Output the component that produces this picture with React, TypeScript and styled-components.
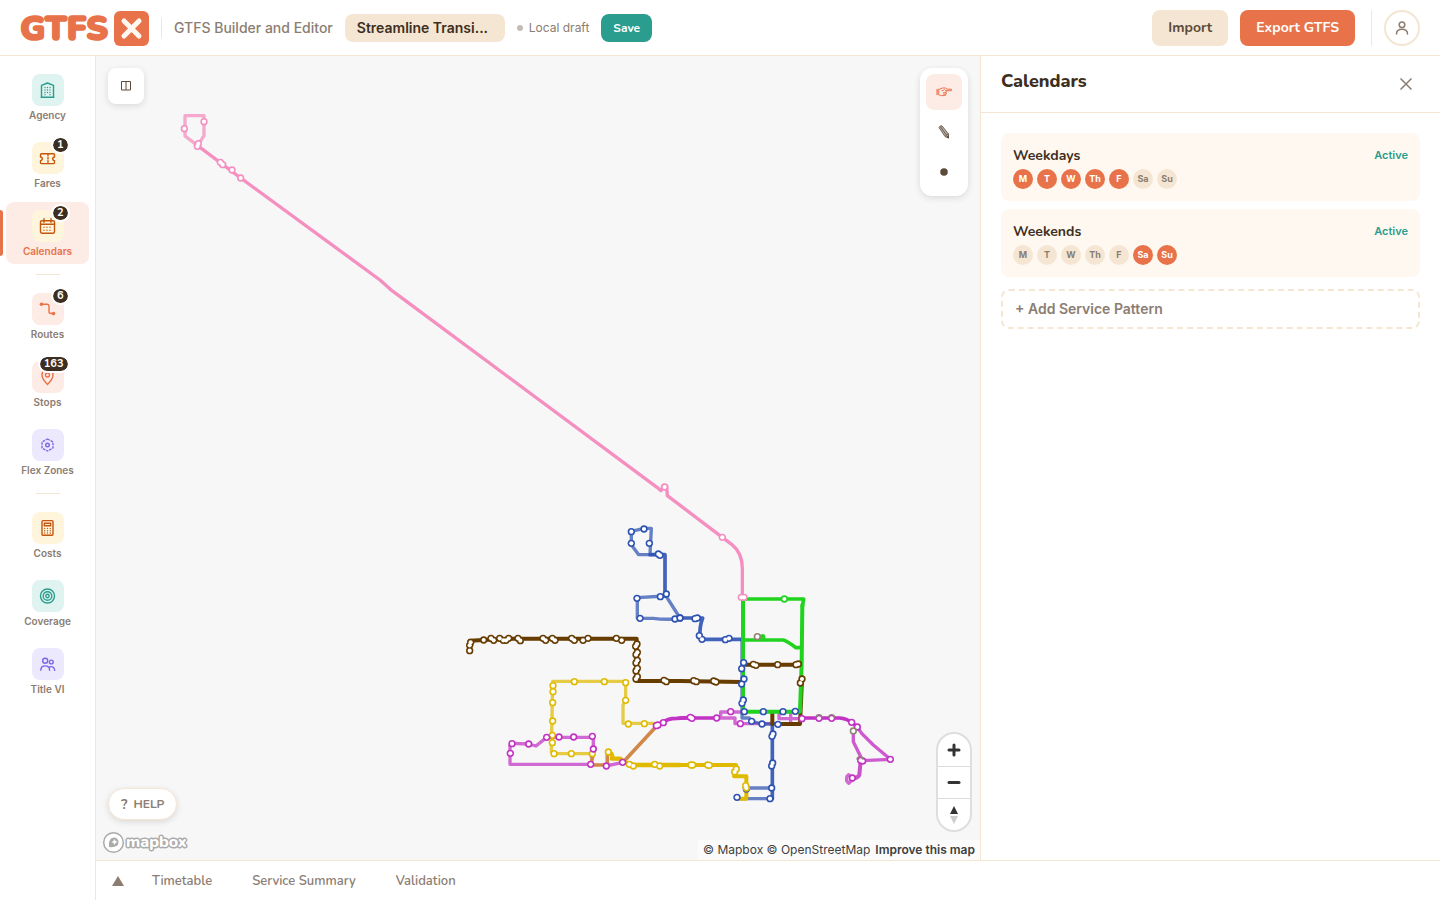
import React from "react";
import styled, { createGlobalStyle, css } from "styled-components";

const c = {
  coral: "#e8734a",
  coralSoft: "#fdebe5",
  teal: "#2a9d8f",
  tealSoft: "#dff4f0",
  sand: "#f5e6d3",
  cream: "#fff8f0",
  amber: "#c2570c",
  amberSoft: "#fff5dc",
  violet: "#7c66e8",
  violetSoft: "#ece9fe",
  ink: "#3d2e22",
  brown: "#5c4a3a",
  muted: "#8b7d72",
};

const rounded = `Nunito, "Open Sans", "Noto Sans", sans-serif`;
const body = `Inter, "Liberation Sans", sans-serif`;

const GlobalStyle = createGlobalStyle`
  *, *::before, *::after { box-sizing: border-box; }
  body { margin: 0; font-family: ${body}; color: ${c.ink}; background: #fff; }
  button { font: inherit; color: inherit; border: 0; background: none; padding: 0; cursor: pointer; }
  a { color: inherit; text-decoration: none; }
  h1, h2, h3, p, ul { margin: 0; padding: 0; }
  svg { display: block; }
`;

const Shell = styled.div`
  display: flex;
  flex-direction: column;
  height: 100vh;
`;

const Header = styled.header`
  display: flex;
  align-items: center;
  flex: none;
  height: 56px;
  padding: 0 20px;
  border-bottom: 1px solid ${c.sand};
`;

const Rule = styled.span<{ $tall?: boolean }>`
  width: 1px;
  height: ${(p) => (p.$tall ? 36 : 20)}px;
  background: ${c.sand};
`;

const Tagline = styled.p`
  margin: 0 12px;
  font-size: 14px;
  font-weight: 500;
  line-height: 20px;
  color: ${c.muted};
`;

const ProjectButton = styled.button`
  width: 160px;
  height: 28px;
  padding: 0 12px;
  border-radius: 8px;
  background: ${c.sand};
  font-size: 14px;
  font-weight: 600;
  text-align: left;
  white-space: nowrap;
`;

const DraftStatus = styled.span`
  display: flex;
  align-items: center;
  gap: 6px;
  margin: 0 12px;
  font-size: 12px;
  color: ${c.muted};
  &::before {
    content: "";
    width: 6px;
    height: 6px;
    border-radius: 50%;
    background: #c4bcb4;
  }
`;

const SaveButton = styled.button`
  height: 28px;
  padding: 0 12px;
  border-radius: 8px;
  background: ${c.teal};
  color: #fff;
  font-family: ${rounded};
  font-size: 12px;
  font-weight: 700;
`;

const HeaderActions = styled.div`
  display: flex;
  align-items: center;
  gap: 12px;
  margin-left: auto;
`;

const ActionButton = styled.button<{ $primary?: boolean }>`
  height: 36px;
  padding: 0 16px;
  border-radius: 8px;
  font-family: ${rounded};
  font-size: 14px;
  font-weight: 700;
  color: ${(p) => (p.$primary ? "#fff" : c.brown)};
  background: ${(p) => (p.$primary ? c.coral : c.sand)};
`;

const AccountArea = styled.div`
  display: flex;
  align-items: center;
  gap: 12px;
  margin-left: 4px;
`;

const Avatar = styled.button`
  display: grid;
  place-items: center;
  width: 36px;
  height: 36px;
  border: 2px solid ${c.sand};
  border-radius: 50%;
  color: ${c.muted};
`;

const Workspace = styled.div`
  display: flex;
  flex: 1;
  min-height: 0;
`;

const Sidebar = styled.nav`
  display: flex;
  flex-direction: column;
  flex: none;
  gap: 6px;
  width: 96px;
  padding: 10px 6px;
  border-right: 1px solid ${c.sand};
`;

const NavDivider = styled.span`
  width: 24px;
  height: 1px;
  margin: 4px auto;
  background: ${c.sand};
`;

const NavItem = styled.button<{ $active?: boolean }>`
  position: relative;
  display: flex;
  flex-direction: column;
  align-items: center;
  gap: 2px;
  padding: 8px 0 6px;
  border-radius: 8px;
  font-size: 10px;
  font-weight: 600;
  line-height: 14px;
  color: ${(p) => (p.$active ? c.coral : c.muted)};
  ${(p) =>
    p.$active &&
    css`
      background: ${c.coralSoft};
      &::before {
        content: "";
        position: absolute;
        left: -6px;
        top: 8px;
        bottom: 8px;
        width: 3px;
        border-radius: 0 3px 3px 0;
        background: ${c.coral};
      }
    `}
`;

const tones = {
  teal: [c.teal, c.tealSoft],
  amber: [c.amber, c.amberSoft],
  coral: [c.coral, c.coralSoft],
  violet: [c.violet, c.violetSoft],
};
type Tone = keyof typeof tones;

const NavIcon = styled.span<{ $tone: Tone }>`
  position: relative;
  display: grid;
  place-items: center;
  width: 32px;
  height: 32px;
  border-radius: 8px;
  color: ${(p) => tones[p.$tone][0]};
  background: ${(p) => tones[p.$tone][1]};
`;

const Badge = styled.span`
  position: absolute;
  top: -6px;
  right: -6px;
  min-width: 18px;
  height: 18px;
  padding: 0 4px;
  border: 2px solid #fff;
  border-radius: 9px;
  background: ${c.ink};
  background-clip: padding-box;
  color: #fff;
  font-family: ${rounded};
  font-size: 11px;
  font-weight: 700;
  line-height: 14px;
  text-align: center;
`;

const Main = styled.main`
  display: flex;
  flex-direction: column;
  flex: 1;
  min-width: 0;
`;

const Split = styled.div`
  display: flex;
  flex: 1;
  min-height: 0;
`;

const MapArea = styled.section`
  position: relative;
  flex: 1;
  min-width: 0;
  background: #f7f7f7;
  overflow: hidden;
`;

const MapCanvas = styled.svg`
  width: 100%;
  height: 100%;
`;

const floating = css`
  position: absolute;
  background: #fff;
  box-shadow: 0 2px 6px rgba(61, 46, 34, 0.14);
`;

const LayoutToggle = styled.button`
  ${floating}
  left: 12px;
  top: 12px;
  display: grid;
  place-items: center;
  width: 36px;
  height: 36px;
  border-radius: 8px;
  color: ${c.brown};
`;

const ToolPalette = styled.div`
  ${floating}
  right: 12px;
  top: 12px;
  display: flex;
  flex-direction: column;
  gap: 4px;
  padding: 6px;
  border-radius: 12px;
`;

const ToolButton = styled.button<{ $active?: boolean }>`
  display: grid;
  place-items: center;
  width: 36px;
  height: 36px;
  border-radius: 8px;
  color: ${(p) => (p.$active ? c.coral : c.brown)};
  background: ${(p) => (p.$active ? c.coralSoft : "transparent")};
`;

const ZoomControls = styled.div`
  position: absolute;
  right: 8px;
  bottom: 28px;
  display: flex;
  flex-direction: column;
  border: 2px solid #dedede;
  border-radius: 18px;
  background: #fff;
  overflow: hidden;
`;

const ZoomButton = styled.button`
  display: grid;
  place-items: center;
  width: 32px;
  height: 32px;
  & + & {
    border-top: 1px solid #ddd;
  }
`;

const HelpButton = styled.button`
  ${floating}
  left: 12px;
  bottom: 40px;
  display: flex;
  align-items: center;
  gap: 6px;
  height: 32px;
  padding: 0 12px;
  border: 1px solid ${c.sand};
  border-radius: 16px;
  font-family: ${rounded};
  font-size: 12px;
  font-weight: 700;
  color: ${c.muted};
`;

const HelpMark = styled.span`
  font-size: 14px;
`;

const MapboxLink = styled.a`
  position: absolute;
  left: 6px;
  bottom: 6px;
`;

const Attribution = styled.p`
  position: absolute;
  right: 0;
  bottom: 0;
  display: flex;
  gap: 5px;
  padding: 0 5px;
  background: rgba(255, 255, 255, 0.5);
  font-size: 12px;
  line-height: 20px;
  color: #404040;
`;

const ImproveLink = styled.a`
  font-weight: 600;
`;

const Panel = styled.aside`
  flex: none;
  width: 460px;
  border-left: 1px solid ${c.sand};
`;

const PanelHeader = styled.div`
  display: flex;
  align-items: flex-start;
  justify-content: space-between;
  height: 57px;
  padding: 12px 20px;
  border-bottom: 1px solid ${c.sand};
`;

const PanelTitle = styled.h2`
  font-family: ${rounded};
  font-size: 18px;
  font-weight: 800;
  line-height: 26px;
`;

const CloseButton = styled.button`
  display: grid;
  place-items: center;
  width: 28px;
  height: 32px;
  color: ${c.muted};
`;

const PanelBody = styled.div`
  display: flex;
  flex-direction: column;
  gap: 12px;
  padding: 20px;
`;

const PatternList = styled.ul`
  display: flex;
  flex-direction: column;
  gap: 8px;
  list-style: none;
`;

const PatternCard = styled.li`
  padding: 12px;
  border-radius: 8px;
  background: ${c.cream};
`;

const PatternHead = styled.div`
  display: flex;
  align-items: flex-start;
  justify-content: space-between;
  margin-bottom: 2px;
`;

const PatternName = styled.h3`
  font-family: ${rounded};
  font-size: 14px;
  font-weight: 700;
  line-height: 22px;
`;

const ActiveTag = styled.span`
  font-size: 11px;
  font-weight: 600;
  line-height: 20px;
  color: ${c.teal};
`;

const Days = styled.div`
  display: flex;
  gap: 4px;
`;

const Day = styled.span<{ $on: boolean }>`
  width: 20px;
  height: 20px;
  border-radius: 50%;
  font-size: 9px;
  font-weight: 700;
  line-height: 20px;
  text-align: center;
  color: ${(p) => (p.$on ? "#fff" : c.muted)};
  background: ${(p) => (p.$on ? c.coral : c.sand)};
`;

const AddButton = styled.button`
  height: 40px;
  padding: 0 12px 2px;
  border: 2px dashed ${c.sand};
  border-radius: 8px;
  font-size: 14px;
  font-weight: 600;
  text-align: left;
  color: ${c.muted};
`;

const BottomBar = styled.footer`
  display: flex;
  align-items: center;
  flex: none;
  height: 40px;
  padding-left: 12px;
  border-top: 1px solid ${c.sand};
  color: ${c.muted};
`;

const ExpandButton = styled.button`
  display: grid;
  place-items: center;
  width: 20px;
  height: 32px;
  margin-right: 4px;
`;

const Tab = styled.button`
  height: 32px;
  padding: 0 20px;
  font-family: ${rounded};
  font-size: 13px;
  font-weight: 600;
`;

const LogoSvg = styled.svg`
  flex: none;
  margin-right: 11px;
`;

function Logo() {
  return (
    <LogoSvg width="130" height="54" viewBox="0 0 130 54" role="img" aria-label="GTFS X">
      <text
        x="0"
        y="39"
        fontFamily={rounded}
        fontSize="34"
        fontWeight="900"
        fill={c.coral}
        stroke={c.coral}
        strokeWidth="1.500"
        strokeLinejoin="round"
      >
        GTFS
      </text>
      <rect x="94" y="10" width="35" height="35" rx="6" fill={c.coral} />
      <path d="M104 20l15 15M119 20l-15 15" stroke={c.cream} strokeWidth="5" strokeLinecap="round" />
    </LogoSvg>
  );
}

function Glyph({ children }: { children: React.ReactNode }) {
  return (
    <svg
      width="18"
      height="18"
      viewBox="0.500 0 18 18"
      fill="none"
      stroke="currentColor"
      strokeWidth="1.400"
      strokeLinecap="round"
      strokeLinejoin="round"
      aria-hidden="true"
    >
      {children}
    </svg>
  );
}

const dots = (xs: number[], ys: number[]) =>
  ys.flatMap((y) => xs.map((x) => <circle key={`${x}-${y}`} cx={x} cy={y} r="0.7" fill="currentColor" stroke="none" />));

const glyphs = {
  agency: (
    <Glyph>
      <path d="M3 16.2V4.4L9 2l6 2.4v11.8M2.6 16.3h12.8" />
      {dots([6.5, 11.5], [6.5, 9, 11.5, 13.8])}
      {dots([9], [6.5, 9, 11.5])}
    </Glyph>
  ),
  fares: (
    <Glyph>
      <path d="M2 5.800q0-1 1-1h12q1 0 1 1v2.200a1.800 1.800 0 0 0 0 3.600V13.600q0 1-1 1H3q-1 0-1-1v-2a1.800 1.800 0 0 0 0-3.600z" />
      <path d="M9.500 5.200v9.200" strokeDasharray="1.600 1.600" />
    </Glyph>
  ),
  calendars: (
    <Glyph>
      <rect x="2" y="3.700" width="14" height="12.500" rx="1.400" />
      <path d="M2 7.300h14M5.500 1.700v3.600M12.500 1.700v3.600" />
      {dots([8.5, 11.5], [10.3])}
      {dots([5.5, 8.5, 11.5], [13.3])}
      {dots([5.5], [10.3])}
    </Glyph>
  ),
  routes: (
    <Glyph>
      <path d="M3 4.200h5.500q2 0 2 2v5.300q0 2 2 2h2.500" />
      <circle cx="3" cy="4.200" r="1.800" fill="currentColor" stroke="none" />
      <circle cx="15" cy="13.600" r="1.800" fill="currentColor" stroke="none" />
    </Glyph>
  ),
  stops: (
    <Glyph>
      <path d="M9 16.500S3.500 11 3.500 7a5.500 5.500 0 0 1 11 0C14.500 11 9 16.500 9 16.500z" />
      <circle cx="9" cy="7" r="2" />
    </Glyph>
  ),
  flex: (
    <Glyph>
      <path d="M9 3l5.500 3v6L9 15l-5.500-3V6z" strokeDasharray="2.600 0.900" strokeLinecap="butt" />
      <circle cx="9" cy="9" r="1.800" />
    </Glyph>
  ),
  costs: (
    <Glyph>
      <rect x="3.500" y="1.600" width="11" height="14.600" rx="1" />
      <rect x="5.800" y="4.300" width="6.400" height="2.400" />
      {dots([6.2, 9, 11.8], [9.4, 11.7, 14])}
    </Glyph>
  ),
  coverage: (
    <Glyph>
      <circle cx="9" cy="9" r="7" />
      <circle cx="9" cy="9" r="4.300" />
      <circle cx="9" cy="9" r="1.700" />
    </Glyph>
  ),
  title: (
    <Glyph>
      <circle cx="6.700" cy="5.800" r="2.500" />
      <circle cx="12.800" cy="7" r="1.900" />
      <path d="M2.300 15.300q0-4.400 4.400-4.400t4.400 4.400M11 11.900q4.600-1.400 5.200 3.400" />
    </Glyph>
  ),
};

type NavEntry = { label: string; glyph: keyof typeof glyphs; tone: Tone; badge?: string; active?: boolean };

const navGroups: NavEntry[][] = [
  [
    { label: "Agency", glyph: "agency", tone: "teal" },
    { label: "Fares", glyph: "fares", tone: "amber", badge: "1" },
    { label: "Calendars", glyph: "calendars", tone: "amber", badge: "2", active: true },
  ],
  [
    { label: "Routes", glyph: "routes", tone: "coral", badge: "6" },
    { label: "Stops", glyph: "stops", tone: "coral", badge: "163" },
    { label: "Flex Zones", glyph: "flex", tone: "violet" },
  ],
  [
    { label: "Costs", glyph: "costs", tone: "amber" },
    { label: "Coverage", glyph: "coverage", tone: "teal" },
    { label: "Title VI", glyph: "title", tone: "violet" },
  ],
];

const line = {
  pink: "#f48fc0",
  green: "#1fd31f",
  brown: "#663c00",
  blue: "#2e52b2",
  yellow: "#dfba00",
  purple: "#c232c4",
  orange: "#d18848",
  grey: "#8f8478",
};
type LineName = keyof typeof line;

type Tile = {
  x: number;
  y: number;
  paths: { color: LineName; d: string; width?: number; opacity?: number }[];
  stops: { color: LineName; at: number[][] }[];
};

/* The network is stored per map tile, three units to a pixel. */
const tiles: Tile[] = [
  {
    x: 222,
    y: 132,
    paths: [
      { color: "pink", opacity: 0.75, d: "M83 137L45 108V47H102V107L83 137" },
      { color: "pink", d: "M83 137L212 234L630 540L666 572L1461 1162L1473 1172L1480 1156L1490 1158L1492 1187L1657 1312" },
    ],
    stops: [
      { color: "pink", at: [[43, 86], [102, 65], [85, 131], [82, 139], [151, 187], [158, 194], [186, 210], [212, 234], [1484, 1161]] },
    ],
  },
  {
    x: 1062,
    y: 1362,
    paths: [
      { color: "blue", opacity: 0.72, d: "M610 134H566L544 104V64L582 55H604L600 134" },
      { color: "blue", opacity: 0.9, width: 11, d: "M600 134H645V258" },
      { color: "blue", opacity: 0.72, d: "M645 258L562 263V325H610Q640 329 676 327L690 324L648 258" },
      { color: "brown", width: 12, d: "M59 424V392L100 390L180 386H560V513L690 513L876 516" },
      { color: "yellow", opacity: 0.72, d: "M620 640H519V585L527 570V514H308L304 725L312 731H430" },
      { color: "purple", opacity: 0.72, d: "M422 763H180V706L186 700L236 702L258 708L290 682H430V718L424 740" },
      { color: "purple", opacity: 0.72, d: "M468 768L518 757" },
      { color: "orange", width: 11, d: "M430 732L422 765H472V730M520 756L622 646" },
      { color: "yellow", width: 13, d: "M474 726Q490 728 486 746H510L538 765H690" },
      { color: "purple", width: 11, d: "M620 646L640 638Q650 625 680 625L724 622" },
    ],
    stops: [
      { color: "blue", at: [[544, 65], [582, 57], [544, 100], [598, 100], [625, 132], [630, 136], [649, 252], [631, 260], [561, 265], [570, 325], [675, 327], [690, 324]] },
      {
        color: "brown",
        at: [
          [59, 422], [59, 406], [62, 397], [101, 390], [123, 385], [131, 391], [149, 385], [160, 391], [168, 391],
          [176, 385], [204, 385], [211, 392], [279, 385], [287, 391], [307, 385], [315, 391], [365, 385], [373, 391],
          [399, 391], [414, 385], [499, 385], [515, 391], [561, 402], [557, 409], [562, 427], [558, 434], [562, 451],
          [558, 459], [562, 475], [558, 483], [562, 500], [558, 507], [642, 511], [649, 515],
        ],
      },
      {
        color: "yellow",
        at: [
          [373, 515], [463, 515], [527, 518], [527, 571], [535, 642], [583, 641], [309, 527], [309, 545], [308, 578],
          [308, 633], [307, 676], [307, 698], [312, 731], [364, 731], [427, 731], [475, 726], [538, 763], [550, 768],
          [614, 763], [629, 768],
        ],
      },
      {
        color: "purple",
        at: [
          [186, 701], [236, 702], [181, 730], [290, 682], [327, 681], [371, 681], [427, 679], [430, 717], [422, 763],
          [469, 768], [518, 757], [619, 647], [624, 645], [640, 638],
        ],
      },
    ],
  },
  {
    x: 1752,
    y: 1392,
    paths: [
      { color: "pink", d: "M127 52L155 73Q187 98 187 145V232" },
      { color: "purple", width: 11, d: "M0 594H110" },
      { color: "purple", opacity: 0.72, d: "M110 594H165V611H358M122 594V576H192M297 580V596H362M332 580V611" },
      { color: "purple", width: 11, d: "M360 594H480Q500 596 515 607L532 621" },
      { color: "purple", opacity: 0.8, d: "M532 621L545 640L580 675L631 718L548 722L520 665V633" },
      { color: "purple", width: 12, opacity: 0.85, d: "M542 722L538 765Q532 776 517 774" },
      { color: "purple", opacity: 0.72, d: "M517 774L506 764Q498 768 500 782L506 790L517 780" },
      { color: "blue", width: 11, opacity: 0.9, d: "M0 294H68Q58 320 60 350L70 358H186" },
      { color: "blue", opacity: 0.72, d: "M186 358V594H208L216 604L246 612H294M200 804H275M170 836H277" },
      { color: "blue", width: 11, opacity: 0.9, d: "M277 612V836" },
      { color: "brown", width: 12, d: "M192 434H362M277 580V612M294 612H360L366 478" },
      { color: "green", width: 12, d: "M189 237V575H360L365 430L367 255" },
      { color: "green", width: 11, d: "M189 237H371L367 260M189 360H310Q320 362 348 383H364" },
      { color: "green", width: 16, d: "M236 354L248 350V354Z" },
      { color: "yellow", width: 12, d: "M0 735H168V750L162 769H199V836H180" },
    ],
    stops: [
      { color: "green", at: [[313, 237]] },
      { color: "pink", at: [[127, 52], [184, 232], [192, 232]] },
      { color: "brown", at: [[220, 433], [228, 436], [293, 434], [348, 434], [355, 432], [366, 477], [361, 489], [41, 482], [49, 485], [101, 483], [108, 486]] },
      {
        color: "purple",
        at: [
          [152, 575], [31, 592], [36, 595], [110, 594], [181, 611], [366, 596], [417, 595], [455, 595], [515, 607],
          [532, 621], [631, 718], [542, 721], [548, 723], [517, 774],
        ],
      },
      { color: "grey", at: [[232, 350], [520, 633]] },
      {
        color: "blue",
        at: [
          [0, 294], [45, 296], [52, 294], [58, 347], [66, 358], [136, 359], [147, 355], [191, 428], [185, 446],
          [192, 477], [185, 492], [190, 540], [186, 550], [193, 575], [250, 575], [309, 575], [346, 574], [215, 604],
          [246, 612], [294, 613], [279, 642], [276, 649], [278, 729], [275, 738], [275, 804], [270, 836], [171, 832], [199, 807],
        ],
      },
      { color: "yellow", at: [[33, 735], [38, 735], [83, 735], [88, 736], [169, 747], [164, 756], [197, 797], [199, 804]] },
    ],
  },
];

const sharedRims = [[417, 593], [455, 593], [540, 719]];

function TransitMap() {
  return (
    <MapCanvas viewBox="0 0 2652 2412" preserveAspectRatio="xMinYMin slice" role="img" aria-label="Transit network map">
      {tiles.map((t) => (
        <g key={t.x} transform={`translate(${t.x} ${t.y})`} fill="none" strokeLinejoin="round" strokeLinecap="round">
          {t.paths.map((p) => (
            <path key={p.d} d={p.d} stroke={line[p.color]} strokeWidth={p.width ?? 10} opacity={p.opacity} />
          ))}
        </g>
      ))}
      {tiles.map((t) => (
        <g key={t.x} transform={`translate(${t.x} ${t.y})`}>
          {t.stops.map((s) => (
            <g key={s.color}>
              {s.at.map(([x, y]) => (
                <circle key={`${x} ${y}`} cx={x} cy={y} r="11" fill={line[s.color]} />
              ))}
              {s.at.map(([x, y]) => (
                <circle key={`${x} ${y}`} cx={x} cy={y} r="6.200" fill="#fff" />
              ))}
            </g>
          ))}
        </g>
      ))}
      <g transform="translate(1752 1392)" fill="none" stroke={line.grey} strokeWidth="4">
        {sharedRims.map(([x, y]) => (
          <path key={x} d={`M${x - 9} ${y}a9 9 0 0 1 18 0`} />
        ))}
      </g>
    </MapCanvas>
  );
}

const weekDays = ["M", "T", "W", "Th", "F", "Sa", "Su"];
const patterns = [
  { name: "Weekdays", runs: ["M", "T", "W", "Th", "F"] },
  { name: "Weekends", runs: ["Sa", "Su"] },
];

export default function App() {
  return (
    <Shell>
      <GlobalStyle />
      <Header>
        <Logo />
        <Rule />
        <Tagline>GTFS Builder and Editor</Tagline>
        <ProjectButton>Streamline Transi...</ProjectButton>
        <DraftStatus>Local draft</DraftStatus>
        <SaveButton>Save</SaveButton>
        <HeaderActions>
          <ActionButton>Import</ActionButton>
          <ActionButton $primary>Export GTFS</ActionButton>
          <AccountArea>
            <Rule $tall />
            <Avatar aria-label="Account">
              <svg width="14" height="14" viewBox="0 0 14 14" fill="none" stroke="currentColor" strokeWidth="1.500" strokeLinecap="round">
                <circle cx="7" cy="3.800" r="2.800" />
                <path d="M1.500 13q0-4.800 5.500-4.800t5.500 4.800" />
              </svg>
            </Avatar>
          </AccountArea>
        </HeaderActions>
      </Header>
      <Workspace>
        <Sidebar aria-label="Editor sections">
          {navGroups.map((group, i) => (
            <React.Fragment key={i}>
              {i > 0 && <NavDivider />}
              {group.map((n) => (
                <NavItem key={n.label} $active={n.active}>
                  <NavIcon $tone={n.tone}>
                    {glyphs[n.glyph]}
                    {n.badge && <Badge>{n.badge}</Badge>}
                  </NavIcon>
                  {n.label}
                </NavItem>
              ))}
            </React.Fragment>
          ))}
        </Sidebar>
        <Main>
          <Split>
            <MapArea>
              <TransitMap />
              <LayoutToggle aria-label="Toggle split view">
                <svg width="10" height="10" viewBox="0 0 10 10" fill="none" stroke="currentColor">
                  <path d="M.5.5h9v8.500h-9zM5 .5V9" />
                </svg>
              </LayoutToggle>
              <ToolPalette>
                <ToolButton $active aria-label="Select">
                  <svg width="16" height="10" viewBox="0 0 16 10" fill="none" stroke="currentColor" strokeLinecap="round" strokeLinejoin="round">
                    <path d="M.5 2.500L3 2v6L.5 7.500z" fill="currentColor" strokeWidth=".6" opacity=".75" />
                    <path d="M3.500 2.200L6.500 1h3l1.500 1.200h4.300q.7.800 0 1.500H9.500M3.500 8l2 .6H9q1.200-.4.800-1.500.9-.5.500-1.500.5-.8-.2-1.700M9.600 5.700H7.400M9.500 7.200H7.500M8.500 2.500Q7.500 3.800 6 3.700" />
                  </svg>
                </ToolButton>
                <ToolButton aria-label="Draw">
                  <svg width="12" height="14" viewBox="0 0 12 14" fill="none" stroke="currentColor" strokeLinejoin="round">
                    <path d="M1 2.500Q2 .5 4 .8L10.500 9v4L7 11.500z" fill="currentColor" fillOpacity=".45" strokeWidth=".8" />
                    <path d="M2.300 1.500l6.200 8.700M7 11.500l1.500-1.300 2-1.200" strokeWidth=".8" />
                    <path d="M9 12.300l1.500-1.500V13z" fill="currentColor" />
                  </svg>
                </ToolButton>
                <ToolButton aria-label="Add stop">
                  <svg width="8" height="8" viewBox="0 0 8 8" fill="currentColor">
                    <circle cx="4" cy="4" r="3.800" />
                  </svg>
                </ToolButton>
              </ToolPalette>
              <ZoomControls>
                <ZoomButton aria-label="Zoom in">
                  <svg width="14" height="14" viewBox="0 0 14 14" stroke="#333" strokeWidth="3" strokeLinecap="round">
                    <path d="M7 2v10M2 7h10" />
                  </svg>
                </ZoomButton>
                <ZoomButton aria-label="Zoom out">
                  <svg width="14" height="14" viewBox="0 0 14 14" stroke="#333" strokeWidth="3" strokeLinecap="round">
                    <path d="M2 6.500h10" />
                  </svg>
                </ZoomButton>
                <ZoomButton aria-label="Reset bearing to north">
                  <svg width="10" height="20" viewBox="0 0 10 20">
                    <path d="M1 9l4-8 4 8z" fill="#333" />
                    <path d="M1 11l4 8 4-8z" fill="#ccc" />
                  </svg>
                </ZoomButton>
              </ZoomControls>
              <HelpButton>
                <HelpMark>?</HelpMark>
                <span>HELP</span>
              </HelpButton>
              <MapboxLink href="#mapbox" aria-label="Mapbox">
                <svg width="90" height="24" viewBox="0 0 90 24">
                  <circle cx="11.500" cy="12.500" r="9.800" fill="#fff" stroke="#aaa" strokeWidth="1.500" />
                  <path d="M7 17q-1-9 5-9.500a4.500 4.500 0 0 1 4.500 5q-.5 5.500-9.500 4.500z" fill="#aaa" />
                  <path d="M12.500 9l1 2 2 1-2 1-1 2-1-2-2-1 2-1z" fill="#fff" />
                  <text
                    x="24"
                    y="17"
                    fontFamily={rounded}
                    fontSize="16"
                    fontWeight="800"
                    fill="#fff"
                    stroke="#aaa"
                    strokeWidth="3"
                    strokeLinejoin="round"
                    paintOrder="stroke"
                  >
                    mapbox
                  </text>
                </svg>
              </MapboxLink>
              <Attribution>
                <span>
                  <a href="#mapbox">© Mapbox</a> <a href="#osm">© OpenStreetMap</a>
                </span>
                <ImproveLink href="#improve">Improve this map</ImproveLink>
              </Attribution>
            </MapArea>
            <Panel>
              <PanelHeader>
                <PanelTitle>Calendars</PanelTitle>
                <CloseButton aria-label="Close panel">
                  <svg width="12" height="12" viewBox="0 0 12 12" stroke="currentColor" strokeWidth="1.500">
                    <path d="M.5.5l11 11M11.500.5l-11 11" />
                  </svg>
                </CloseButton>
              </PanelHeader>
              <PanelBody>
                <PatternList>
                  {patterns.map((p) => (
                    <PatternCard key={p.name}>
                      <PatternHead>
                        <PatternName>{p.name}</PatternName>
                        <ActiveTag>Active</ActiveTag>
                      </PatternHead>
                      <Days>
                        {weekDays.map((d) => (
                          <Day key={d} $on={p.runs.includes(d)}>
                            {d}
                          </Day>
                        ))}
                      </Days>
                    </PatternCard>
                  ))}
                </PatternList>
                <AddButton>+ Add Service Pattern</AddButton>
              </PanelBody>
            </Panel>
          </Split>
          <BottomBar>
            <ExpandButton aria-label="Expand timetable">
              <svg width="12" height="10" viewBox="0 0 12 10" fill="currentColor">
                <path d="M6 0l6 10H0z" />
              </svg>
            </ExpandButton>
            <Tab>Timetable</Tab>
            <Tab>Service Summary</Tab>
            <Tab>Validation</Tab>
          </BottomBar>
        </Main>
      </Workspace>
    </Shell>
  );
}
